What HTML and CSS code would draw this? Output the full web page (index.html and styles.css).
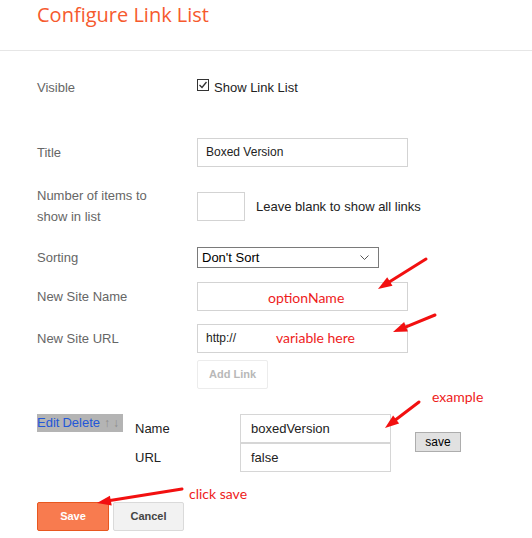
FILE: index.html
```html
<!DOCTYPE html>
<html lang="en">
<head>
  <meta charset="UTF-8">
  <title>Configure Link List</title>
  <link rel="stylesheet" href="styles.css">
</head>
<body>
  <div class="page">

    <!-- cabecalho -->
    <div class="header">
      <h1>Configure Link List</h1>
    </div>

    <!-- formulario -->
    <div class="form">
      <div class="row row-visible">
        <div class="row-label">Visible</div>
        <label class="check">
          <svg class="check-box" width="12" height="12" viewBox="0 0 12 12">
            <rect x="0.5" y="0.5" width="11" height="11" fill="#fff" stroke="#333"/>
            <polyline points="2.5,6 5,8.5 9.5,3" fill="none" stroke="#333" stroke-width="1.3"/>
          </svg>
          Show Link List
        </label>
      </div>

      <div class="row row-title">
        <div class="row-label">Title</div>
        <div class="field">Boxed Version</div>
      </div>

      <div class="row row-count">
        <div class="row-label two-lines">Number of items to<br>show in list</div>
        <div class="field field-small"></div>
        <span class="hint">Leave blank to show all links</span>
      </div>

      <div class="row row-sort">
        <div class="row-label">Sorting</div>
        <div class="select">
          Don't Sort
          <svg width="9" height="5" viewBox="0 0 9 5">
            <polyline points="0.5,0.5 4.5,4.5 8.5,0.5" fill="none" stroke="#555" stroke-width="1"/>
          </svg>
        </div>
      </div>

      <div class="row row-name">
        <div class="row-label">New Site Name</div>
        <div class="field"></div>
      </div>

      <div class="row row-url">
        <div class="row-label">New Site URL</div>
        <div class="field">http://</div>
      </div>

      <div class="row row-add">
        <div class="row-label"></div>
        <div class="btn btn-disabled">Add Link</div>
      </div>

      <!-- link ja cadastrado -->
      <div class="link-item">
        <div class="link-actions">
          <a href="#">Edit</a> <a href="#">Delete</a>
          <span class="arrows"><span>&#8593;</span><span>&#8595;</span></span>
        </div>
        <div class="link-fields">
          <div class="link-label">Name</div>
          <div class="field field-link">boxedVersion</div>
          <div class="link-label">URL</div>
          <div class="field field-link">false</div>
        </div>
        <div class="btn-system">save</div>
      </div>

      <div class="buttons">
        <div class="btn btn-primary">Save</div>
        <div class="btn btn-cancel">Cancel</div>
      </div>
    </div>

    <!-- anotacoes em vermelho -->
    <svg class="notes" width="532" height="538" viewBox="0 0 532 538">
      <g stroke="#f21010" stroke-width="3" stroke-linecap="round">
        <line x1="426" y1="259" x2="390" y2="281.6"/>
        <line x1="435" y1="315" x2="406" y2="326.8"/>
        <line x1="419" y1="402" x2="396" y2="419.5"/>
        <line x1="182" y1="489" x2="110" y2="500.6"/>
      </g>
      <g fill="#f21010">
        <polygon points="378,289 392.5,285.8 387.2,277.3"/>
        <polygon points="393,332 407.9,331.4 404.1,322.1"/>
        <polygon points="385,428 399.1,423.5 393.1,415.5"/>
        <polygon points="97,503 111.7,505.5 109.9,495.7"/>
      </g>
      <g class="note-text">
        <text x="268" y="303">optionName</text>
        <text x="276" y="343">variable here</text>
        <text x="432" y="402">example</text>
        <text x="189" y="499">click save</text>
      </g>
    </svg>
  </div>
</body>
</html>
```

FILE: styles.css
```css
/* ---------- BASE ---------- */
* {
  box-sizing: border-box;
  margin: 0;
  padding: 0;
}
body {
  background: #fff;
  font-family: Arial, "Liberation Sans", sans-serif;
  font-size: 13px;
  color: #222;
}
.page {
  position: relative;
  width: 532px;
  height: 538px;
  overflow: hidden;
}

/* ---------- CABECALHO ---------- */
.header {
  height: 51px;
  padding: 1px 0 0 37px;
  border-bottom: 1px solid #e6e6e6;
}
.header h1 {
  font-family: "Open Sans", sans-serif;
  font-size: 20px;
  font-weight: 400;
  line-height: 28px;
  color: #f65a2e;
}

/* ---------- LINHAS DO FORM ---------- */
.form {
  padding-left: 37px;
}
.row {
  display: flex;
  align-items: center;
}
.row-label {
  width: 160px;
  flex-shrink: 0;
  color: #666;
  line-height: 16px;
}
.row-label.two-lines {
  line-height: 21px;
}
.row-visible { margin-top: 29px; align-items: flex-start; line-height: 16px; }
.row-title   { margin-top: 42px; }
.row-count   { margin-top: 18px; }
.row-sort    { margin-top: 20px; }
.row-name    { margin-top: 14px; }
.row-url     { margin-top: 13px; }
.row-add     { margin-top: 7px; }

.check {
  display: flex;
  align-items: flex-start;
  color: #222;
}
.check-box {
  margin: -1px 5px 0 0;
}

/* ---------- CAMPOS ---------- */
.field {
  width: 211px;
  height: 29px;
  border: 1px solid #d3d3d3;
  padding-left: 8px;
  font-size: 12px;
  line-height: 27px;
  color: #222;
}
.field-small {
  width: 48px;
}
.hint {
  margin-left: 11px;
  color: #222;
}
.select {
  width: 182px;
  height: 21px;
  border: 1px solid #7a7a7a;
  padding: 0 9px 0 4px;
  display: flex;
  align-items: center;
  justify-content: space-between;
  color: #000;
  line-height: 19px;
}

/* ---------- BOTOES ---------- */
.btn {
  height: 29px;
  border: 1px solid;
  border-radius: 2px;
  font-size: 11px;
  font-weight: bold;
  line-height: 27px;
  text-align: center;
}
.btn-disabled {
  width: 71px;
  border-color: #ececec;
  color: #b8b8b8;
}
.btn-primary {
  width: 72px;
  background: #f87b4f;
  border-color: #e8571f;
  color: #fff;
}
.btn-cancel {
  width: 71px;
  margin-left: 4px;
  background: #f2f2f2;
  border-color: #dadada;
  color: #444;
}
.buttons {
  display: flex;
  margin-top: 30px;
}

/* ---------- LINK CADASTRADO ---------- */
.link-item {
  display: flex;
  align-items: flex-start;
  margin-top: 25px;
}
.link-actions {
  display: flex;
  gap: 3px;
  width: 86px;
  height: 18px;
  line-height: 18px;
  background: #b4b4b4;
  white-space: nowrap;
}
.link-actions a {
  color: #2357d8;
  text-decoration: none;
}
.link-actions .arrows {
  display: flex;
  gap: 3px;
  margin-left: 1px;
  color: #8c8c8c;
  font-size: 12px;
}
.link-fields {
  display: grid;
  grid-template-columns: 105px 151px;
  margin-left: 12px;
}
.link-label {
  line-height: 29px;
  color: #222;
}
.field-link {
  width: 151px;
  padding-left: 10px;
  font-size: 13px;
  border-color: #d6d6d6;
}
.btn-system {
  width: 46px;
  height: 20px;
  margin: 18px 0 0 24px;
  background: #e1e1e1;
  border: 1px solid #adadad;
  font-size: 12px;
  line-height: 18px;
  text-align: center;
  color: #000;
}

/* ---------- ANOTACOES ---------- */
.notes {
  position: absolute;
  top: 0;
  left: 0;
  pointer-events: none;
}
.note-text text {
  font-family: Lato, sans-serif;
  font-size: 14px;
  fill: #ee1c1c;
}
```
